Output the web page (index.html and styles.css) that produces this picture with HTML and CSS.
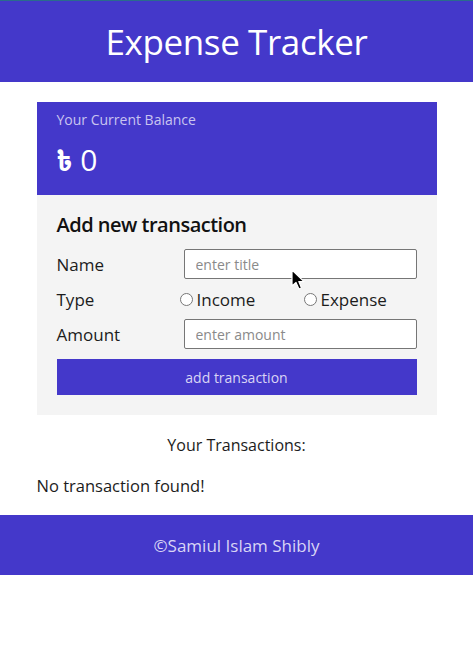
FILE: index.html
```html
<!DOCTYPE html>
<html>
<head>
<meta charset="utf-8">
<link rel="stylesheet" href="styles.css">
</head>
<body>
<header class="top">
  <h1 class="title">Expense Tracker</h1>
</header>
<main class="wrap">
  <section class="balance">
    <div class="balance-label">Your Current Balance</div>
    <div class="balance-value"><span class="taka">৳</span> 0</div>
  </section>
  <section class="form">
    <h2 class="form-title">Add new transaction</h2>
    <div class="row">
      <label class="lbl">Name</label>
      <input class="field" type="text" placeholder="enter title">
    </div>
    <div class="row row-type">
      <span class="lbl">Type</span>
      <label class="radio"><input type="radio" name="t"> Income</label>
      <label class="radio"><input type="radio" name="t"> Expense</label>
    </div>
    <div class="row">
      <label class="lbl">Amount</label>
      <input class="field" type="text" placeholder="enter amount">
    </div>
    <button class="btn">add transaction</button>
  </section>
  <h3 class="tx-title">Your Transactions:</h3>
  <p class="empty">No transaction found!</p>
</main>
<footer class="foot">©Samiul Islam Shibly</footer>
<svg class="cursor" width="16" height="22" viewBox="0 0 16 22"><path d="M1 1 L1 17 L5 13.5 L8 20 L10.5 19 L7.8 12.6 L13 12.6 Z" fill="#000" stroke="#fff" stroke-width="1.2" stroke-linejoin="round"/></svg>
</body>
</html>
```
FILE: styles.css
```css
* { box-sizing: border-box; }
body {
  margin: 0;
  font-family: "Open Sans", Lato, sans-serif;
  color: #1c1c1c;
  background: #fff;
}
.top {
  background: #4438ca;
  border-top: 1px solid #2a6c8c;
  height: 82px;
  display: flex;
  align-items: center;
  justify-content: center;
}
.title {
  margin: 0;
  color: #fff;
  font-size: 35px;
  font-weight: 500;
  letter-spacing: -0.4px;
}
.wrap {
  width: 400px;
  margin: 20px auto 0;
}
.balance {
  background: #4438ca;
  padding: 8px 20px 16px;
  height: 93px;
}
.balance-label {
  color: #c9c4f0;
  font-size: 14px;
}
.balance-value {
  color: #fff;
  font-size: 30px;
  margin-top: 13px;
  line-height: 36px;
}
.taka {
  font-family: "Noto Sans Bengali", "DejaVu Sans", sans-serif;
  font-weight: 700;
  font-size: 26px;
}
.form {
  background: #f4f4f4;
  padding: 16px 20px 20px;
}
.form-title {
  margin: 0 0 11px;
  font-size: 20px;
  font-weight: 600;
  color: #111;
  letter-spacing: -0.5px;
}
.row {
  display: grid;
  grid-template-columns: 127px 1fr;
  align-items: center;
  height: 30px;
  margin-bottom: 5px;
  font-size: 17px;
}
.row-type {
  grid-template-columns: 123px 124px 1fr;
}
.field {
  height: 30px;
  border: 1px solid #767676;
  border-radius: 2px;
  padding: 0 11px;
  font-family: inherit;
  font-size: 14px;
  background: #fff;
}
.field::placeholder { color: #8a8a8a; }
.radio {
  display: flex;
  align-items: center;
  gap: 4px;
}
.radio input {
  margin: 0;
  width: 13px;
  height: 13px;
}
.btn {
  display: block;
  width: 100%;
  height: 36px;
  margin-top: 10px;
  border: 0;
  background: #4438ca;
  color: #d9d5f5;
  font-family: inherit;
  font-size: 14px;
}
.tx-title {
  text-align: center;
  font-size: 16px;
  font-weight: 400;
  margin: 19px 0 0;
}
.empty {
  font-size: 16.5px;
  margin: 18px 0 18px;
}
.foot {
  background: #4438ca;
  color: #d9d5f5;
  height: 60px;
  display: flex;
  align-items: center;
  justify-content: center;
  font-size: 17px;
}
.cursor {
  position: absolute;
  left: 291px;
  top: 269px;
}
```
